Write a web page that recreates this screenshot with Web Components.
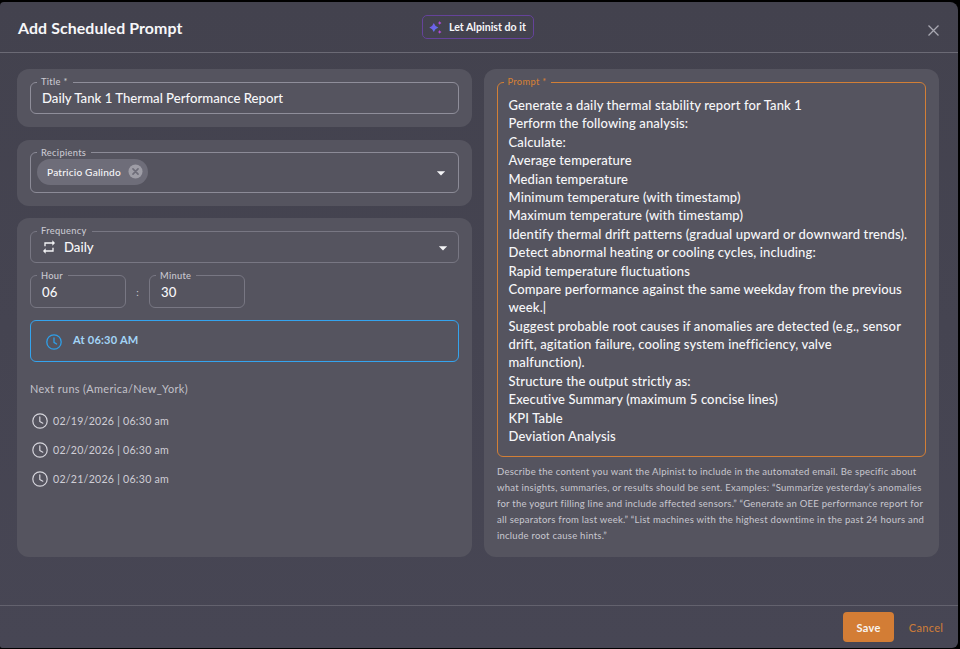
<!DOCTYPE html>
<html><head><meta charset="utf-8">
<style>
html,body{margin:0;height:649px;background:#000;overflow:hidden}
body{font-family:Lato,"Noto Sans",sans-serif;color:#f7f7f9}
</style></head><body>
<template id="t-dialog"><style>
:host{display:flex;flex-direction:column;box-sizing:border-box;height:646px;width:958px;margin-top:2px;background:linear-gradient(180deg,#43424e,#474654);border-radius:4px 8px 6px 2px;overflow:hidden}
header{box-sizing:border-box;height:51px;flex:none;display:flex;align-items:center;padding:0 19px 0 18px;position:relative;border-bottom:1px solid #6b6a75}
main{flex:1;min-height:0;display:grid;grid-template-columns:455px 455px;gap:12px;padding:16px 0 0 17px;align-content:start}
footer{box-sizing:border-box;height:43px;flex:none;border-top:1px solid #63626e;display:flex;align-items:flex-start;justify-content:flex-end;gap:14px;padding:6px 14px 0 0}
.col{display:flex;flex-direction:column;gap:12.5px}
::slotted([slot=title]){font-size:15.9px;font-weight:700;flex:1;letter-spacing:.1px}
</style><header><slot name="title"></slot><slot name="action"></slot><slot name="close"></slot></header><main><div class="col"><slot name="left"></slot></div><slot name="right"></slot></main><footer><slot name="foot"></slot></footer></template>

<template id="t-card"><style>
:host{display:block;box-sizing:border-box;background:#55545f;border-radius:12px;padding:13px}
</style><slot></slot></template>

<template id="t-field"><style>
:host{display:block;box-sizing:border-box;--bc:#8c8b97;--lc:#c9c8d0}
fieldset{margin:-5px 0 0;padding:0 11px;box-sizing:border-box;height:calc(var(--h,32px) + 5px);border:1px solid var(--bc);border-radius:6px;display:flex;align-items:center;gap:9px;font-size:13.2px;font-weight:500;min-width:0}
legend{margin-left:-5px;padding:0 5px 0 4px;font-size:9.3px;line-height:10px;height:10px;color:var(--lc);letter-spacing:.3px;font-weight:500}
.v{flex:1;min-width:0;display:flex;align-items:center;gap:7px;transform:translateY(-2px)}
svg.caret{display:none;flex:none;margin-right:var(--cr,-6px);transform:translateY(var(--cy,-1px))}
:host([caret]) svg.caret{display:block}
</style><fieldset><legend></legend><div class="v"><slot></slot></div><svg class="caret" width="20" height="20" viewBox="0 0 24 24" fill="#f4f4f6"><path d="M7 10l5 5 5-5z"/></svg></fieldset></template>

<template id="t-chip"><style>
:host{display:inline-flex;align-items:center;box-sizing:border-box;height:26px;width:111px;border-radius:13px;background:#6e6d79;padding:0 5px 0 10px;justify-content:space-between;font-size:10.1px;letter-spacing:.2px;font-weight:500;margin-left:-5px;margin-top:-2px}
svg{display:block}
</style><slot></slot><svg width="15" height="15" viewBox="0 0 16 16"><circle cx="8" cy="8" r="7.500" fill="#9e9da6"/><path d="M5.300 5.300l5.400 5.400M10.700 5.300l-5.400 5.400" stroke="#6e6d79" stroke-width="1.800" stroke-linecap="round"/></svg></template>

<template id="t-ai"><style>
:host{position:absolute;left:422px;top:13px;display:flex;align-items:center;box-sizing:border-box;height:24px;width:112px;border:1px solid #65439a;border-radius:5px;padding:0 0 0 6px;gap:6px;font-size:10.600px;font-weight:700;color:#f7f7f9;white-space:nowrap}
</style><svg width="14" height="15" viewBox="0 0 14 15"><defs><linearGradient id="g" x1="0" y1="0" x2="1" y2="1"><stop offset="0" stop-color="#7a52e4"/><stop offset="1" stop-color="#5a78ee"/></linearGradient></defs><path d="M4.800 3Q5.800 6.300 9.300 7.500 5.800 8.700 4.800 12 3.800 8.700 .3 7.500 3.800 6.300 4.800 3Z" fill="url(#g)"/><path d="M10.700 1Q11 2.500 12.500 3 11 3.400 10.700 4.800 10.400 3.400 8.900 3 10.400 2.500 10.700 1ZM10.700 10Q11 11.500 12.500 12 11 12.400 10.700 13.800 10.400 12.400 8.900 12 10.400 11.500 10.700 10Z" fill="#b548dc"/></svg><slot></slot></template>

<template id="t-run"><style>
:host{display:flex;align-items:center;gap:5.500px;font-size:10.600px;color:#cfced6;letter-spacing:.25px;height:17px}
svg{display:block;flex:none;margin-left:1.500px}
</style><svg width="16" height="16" viewBox="0 0 16 16" fill="none" stroke="#d6d5dc" stroke-width="1.200" stroke-linecap="round" stroke-linejoin="round"><circle cx="8" cy="8" r="7.200"/><path d="M7.800 3.900V8.400L10.800 10.200"/></svg><slot></slot></template>

<template id="t-freq"><style>
:host{display:flex;flex-direction:column;height:313px}
.times{display:flex;align-items:center;margin-top:12.500px}
.times span{width:23px;text-align:center;font-size:10px;color:#cfced6}
.times ::slotted(*){width:96px}
</style><slot name="freq"></slot><div class="times"><slot name="hour"></slot><span>:</span><slot name="minute"></slot></div><slot name="rest"></slot></template>

<template id="t-info"><style>
:host{display:flex;align-items:center;box-sizing:border-box;height:41.500px;margin-top:12.500px;border:1px solid #34a4ee;border-radius:6px;padding:0 0 0 15px;gap:11px;font-size:11.100px;font-weight:700;color:#a3d5f7;letter-spacing:.2px}
svg{display:block;flex:none;transform:translateY(1px)}
span{transform:translateY(-1px)}
</style><svg width="16" height="16" viewBox="0 0 16 16" fill="none" stroke="#2f9fe8" stroke-width="1.300" stroke-linecap="round" stroke-linejoin="round"><circle cx="8" cy="8" r="7.200"/><path d="M8 4V8.400L10.600 10"/></svg><span><slot></slot></span></template>

<template id="t-next"><style>
:host{display:flex;flex-direction:column;gap:12px;margin-top:20px}
.h{font-size:10.900px;color:#c3c2ca;letter-spacing:.35px;height:14px;line-height:14px;margin-bottom:5px}
</style><div class="h">Next runs (America/New_York)</div><slot></slot></template>

<template id="t-prompt"><style>
:host{display:block;box-sizing:border-box;background:#55545f;border-radius:12px;padding:13px 13px 0;height:488px}
fieldset{margin:-5px 0 0;padding:0 15.500px 0 10.500px;box-sizing:border-box;height:380px;border:1px solid #d27f36;border-radius:6px;min-width:0}
legend{margin-left:-5px;padding:0 5px 0 4px;font-size:9.300px;line-height:10px;height:10px;color:#d27f36;letter-spacing:.3px;font-weight:500}
.text{font-size:13px;line-height:18.390px;font-weight:500;white-space:pre-wrap;margin-top:9px;letter-spacing:.13px}
.help{font-size:9.500px;line-height:16px;color:#c9c8d0;margin-top:7px;letter-spacing:.25px}
</style><fieldset><legend>Prompt *</legend><div class="text"><slot></slot></div></fieldset><div class="help"><slot name="help"></slot></div></template>

<template id="t-btn"><style>
:host{display:flex;align-items:center;justify-content:center;box-sizing:border-box;height:30px;font-size:11px;font-weight:700;letter-spacing:.3px}
:host([primary]){width:51px;background:#d37d35;border-radius:4px;color:#f8f4f0}
:host(:not([primary])){color:#c97b3a;font-weight:500;width:36px}
</style><slot></slot></template>

<template id="t-x"><style>
:host{display:block;width:11px;height:11px;margin-top:7px}svg{display:block}
</style><svg width="11" height="11" viewBox="0 0 11 11" fill="none" stroke="#a9a8b2" stroke-width="1.300"><path d="M.5 .5L10.500 10.500M10.500 .5L.5 10.500"/></svg></template>

<x-dialog>
  <div slot="title">Add Scheduled Prompt</div>
  <x-ai slot="action">Let Alpinist do it</x-ai>
  <x-close slot="close"></x-close>
  <x-card slot="left"><x-field label="Title *" style="--bc:#8f8e9a">Daily Tank 1 Thermal Performance Report</x-field></x-card>
  <x-card slot="left"><x-field label="Recipients" caret style="--h:40px;--cr:-4px;--cy:-2px"><x-chip>Patricio Galindo</x-chip></x-field></x-card>
  <x-card slot="left"><x-freq>
    <x-field slot="freq" label="Frequency" caret style="--bc:#787783"><svg width="16" height="16" viewBox="0 0 24 24" fill="#f4f4f6" style="display:block;margin-left:-1px"><path d="M7 7h10v3l4-4-4-4v3H5v6h2V7zm10 10H7v-3l-4 4 4 4v-3h12v-6h-2v4z"/></svg><span>Daily</span></x-field>
    <x-field slot="hour" label="Hour" style="--bc:#787783">06</x-field>
    <x-field slot="minute" label="Minute" style="--bc:#787783">30</x-field>
    <x-info slot="rest">At 06:30 AM</x-info>
    <x-next slot="rest"><x-run>02/19/2026 | 06:30 am</x-run><x-run>02/20/2026 | 06:30 am</x-run><x-run>02/21/2026 | 06:30 am</x-run></x-next>
  </x-freq></x-card>
  <x-prompt slot="right">Generate a daily thermal stability report for Tank 1
Perform the following analysis:
Calculate:
Average temperature
Median temperature
Minimum temperature (with timestamp)
Maximum temperature (with timestamp)
Identify thermal drift patterns (gradual upward or downward trends).
Detect abnormal heating or cooling cycles, including:
Rapid temperature fluctuations
Compare performance against the same weekday from the previous week.|
Suggest probable root causes if anomalies are detected (e.g., sensor drift, agitation failure, cooling system inefficiency, valve malfunction).
Structure the output strictly as:
Executive Summary (maximum 5 concise lines)
KPI Table
Deviation Analysis<span slot="help">Describe the content you want the Alpinist to include in the automated email. Be specific about what insights, summaries, or results should be sent. Examples: “Summarize yesterday’s anomalies for the yogurt filling line and include affected sensors.” “Generate an OEE performance report for all separators from last week.” “List machines with the highest downtime in the past 24 hours and include root cause hints.”</span></x-prompt>
  <x-btn slot="foot" primary>Save</x-btn>
  <x-btn slot="foot">Cancel</x-btn>
</x-dialog>
<script>
const def=(n,id,extra)=>customElements.define(n,class extends HTMLElement{constructor(){super();this.attachShadow({mode:'open'}).appendChild(document.getElementById(id).content.cloneNode(true));}connectedCallback(){extra&&extra(this)}});
def('x-dialog','t-dialog');def('x-card','t-card');
def('x-field','t-field',e=>{e.shadowRoot.querySelector('legend').textContent=e.getAttribute('label')});
def('x-chip','t-chip');def('x-ai','t-ai');def('x-run','t-run');def('x-freq','t-freq');def('x-info','t-info');def('x-next','t-next');def('x-prompt','t-prompt');def('x-btn','t-btn');def('x-close','t-x');
</script>
</body></html>
